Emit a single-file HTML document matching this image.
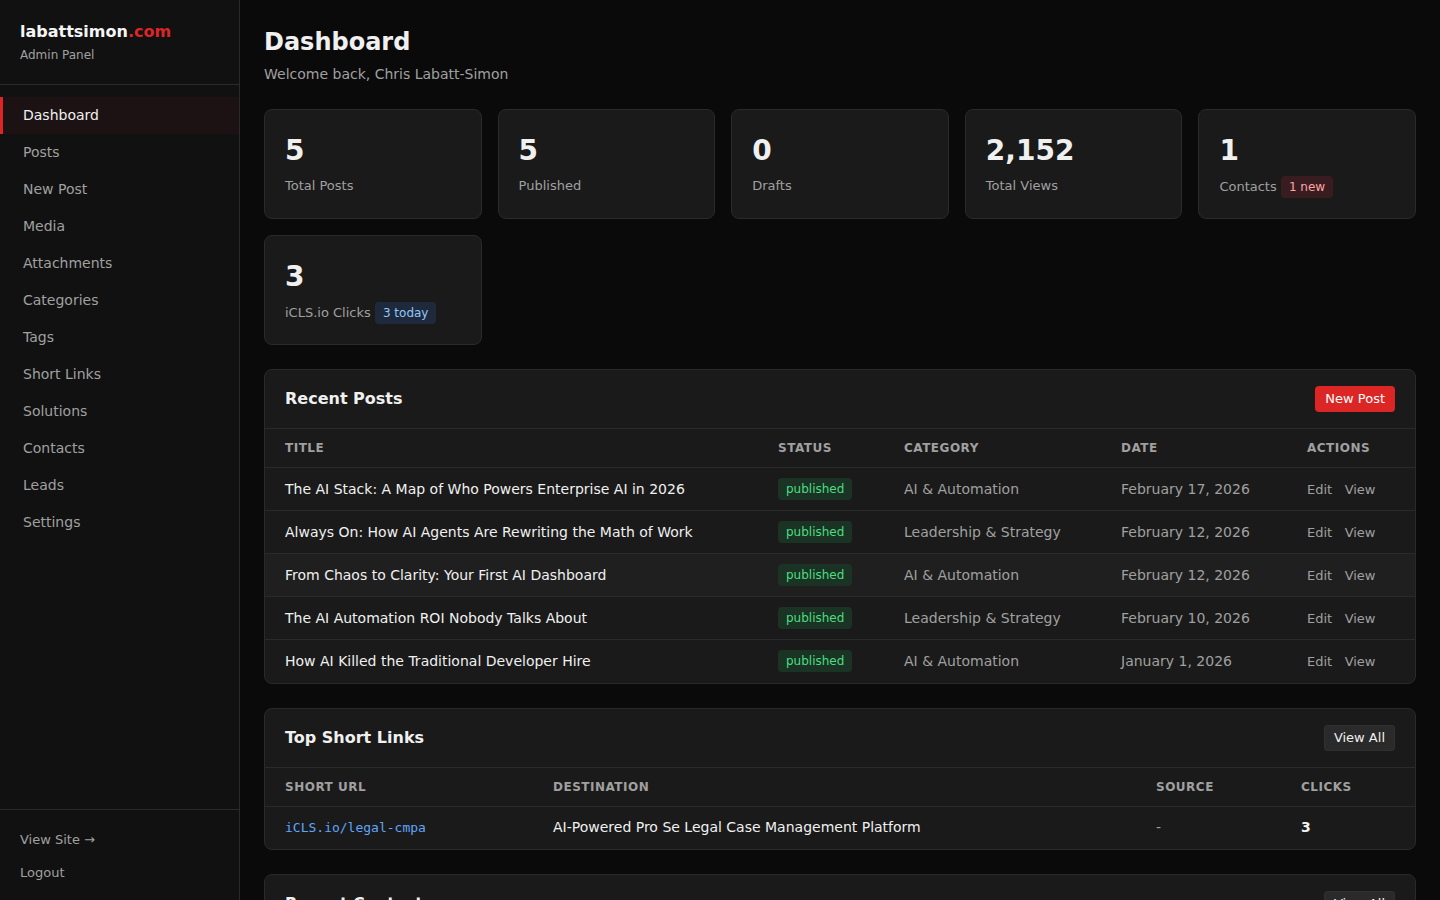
<!DOCTYPE html>
<html lang="en">
<head>
<meta charset="utf-8">
<title>Dashboard - Admin</title>
<style>
*{box-sizing:border-box;margin:0;padding:0}
html,body{width:1440px;height:900px;overflow:hidden}
body{background:#0a0a0a;color:#f0f0f0;font-family:"DejaVu Sans","Liberation Sans",sans-serif;font-size:14px;line-height:1.5}
a{color:inherit;text-decoration:none}
.sidebar{position:fixed;left:0;top:0;width:240px;height:900px;background:#111;border-right:1px solid #2a2a2a;display:flex;flex-direction:column}
.sb-head{padding:20px;border-bottom:1px solid #2a2a2a;height:85px}
.sb-head h1{font-size:16px;font-weight:700;line-height:24px;color:#f5f5f5}
.sb-head h1 span{color:#dc2626}
.sb-head small{display:block;font-size:12px;line-height:18px;color:#a0a0a0;margin-top:2px}
.nav{padding-top:12px;flex:1}
.nav a{display:block;height:37px;line-height:37px;padding-left:20px;border-left:3px solid transparent;font-size:14px;color:#a0a0a0}
.nav a.active{border-left-color:#dc2626;background:#1c1213;color:#f0f0f0}
.sb-foot{border-top:1px solid #2a2a2a;height:91px;padding:13px 20px 0}
.sb-foot a{display:block;font-size:13px;color:#a0a0a0;height:33px;line-height:33px}
.main{margin-left:240px;padding:24px}
.main h2{font-size:24px;font-weight:700;line-height:36px;color:#f0f0f0}
.main .sub{font-size:14px;color:#a0a0a0;line-height:21px;margin-top:4px}
.stats{display:grid;grid-template-columns:repeat(5,1fr);gap:16px;margin-top:24px}
.stat{background:#1a1a1a;border:1px solid #2a2a2a;border-radius:8px;height:110px;padding:20px}
.stat .n{font-size:28px;font-weight:700;line-height:42px;color:#f0f0f0}
.stat .l{font-size:13px;color:#a0a0a0;line-height:19.5px;margin-top:4px}
.badge{display:inline-block;font-size:12px;line-height:18px;padding:2px 8px;border-radius:4px}
.b-red{background:#391c20;color:#fca5a5}
.b-blue{background:#1e2a3c;color:#93c5fd}
.panel{background:#1a1a1a;border:1px solid #2a2a2a;border-radius:8px;margin-top:24px;overflow:hidden}
.p-head{height:59px;display:flex;align-items:center;justify-content:space-between;padding:0 20px;border-bottom:1px solid #2a2a2a}
.p-head h3{font-size:16px;font-weight:700;color:#f0f0f0}
.btn{display:inline-block;font-size:13px;height:26px;line-height:26px;padding:0 10px;border-radius:4px}
.btn-red{background:#dc2626;color:#fff}
.btn-gray{background:#2a2a2a;color:#f0f0f0;box-shadow:inset 0 0 0 1px #303030}
table{width:100%;border-collapse:separate;border-spacing:0}
th{height:39px;text-align:left;font-size:12px;font-weight:700;letter-spacing:.5px;color:#a0a0a0;padding:0 20px;text-transform:uppercase;border-bottom:1px solid #2a2a2a}
td{height:43px;padding:0 20px;font-size:14px;border-bottom:1px solid #2a2a2a;color:#f0f0f0}
tbody tr:last-child td{border-bottom-color:transparent}
.links td{height:42px}
tr.hov td{background:#1f1f1f}
td.m{color:#a0a0a0}
.pub{display:inline-block;background:#1b3324;color:#4ade80;font-size:12px;line-height:18px;padding:2px 8px;border-radius:4px}
.act a{font-size:13px;color:#a0a0a0;margin-right:8px}
.mono{font-family:"DejaVu Sans Mono","Liberation Mono",monospace;font-size:13px;color:#60a5fa}
</style>
</head>
<body>
<aside class="sidebar">
  <div class="sb-head">
    <h1>labattsimon<span>.com</span></h1>
    <small>Admin Panel</small>
  </div>
  <nav class="nav">
    <a class="active" href="#">Dashboard</a>
    <a href="#">Posts</a>
    <a href="#">New Post</a>
    <a href="#">Media</a>
    <a href="#">Attachments</a>
    <a href="#">Categories</a>
    <a href="#">Tags</a>
    <a href="#">Short Links</a>
    <a href="#">Solutions</a>
    <a href="#">Contacts</a>
    <a href="#">Leads</a>
    <a href="#">Settings</a>
  </nav>
  <div class="sb-foot">
    <a href="#">View Site →</a>
    <a href="#">Logout</a>
  </div>
</aside>
<main class="main">
  <h2>Dashboard</h2>
  <p class="sub">Welcome back, Chris Labatt-Simon</p>
  <section class="stats">
    <div class="stat"><div class="n">5</div><div class="l">Total Posts</div></div>
    <div class="stat"><div class="n">5</div><div class="l">Published</div></div>
    <div class="stat"><div class="n">0</div><div class="l">Drafts</div></div>
    <div class="stat"><div class="n">2,152</div><div class="l">Total Views</div></div>
    <div class="stat"><div class="n">1</div><div class="l">Contacts <span class="badge b-red">1 new</span></div></div>
    <div class="stat"><div class="n">3</div><div class="l">iCLS.io Clicks <span class="badge b-blue">3 today</span></div></div>
  </section>
  <section class="panel">
    <div class="p-head"><h3>Recent Posts</h3><a class="btn btn-red" href="#">New Post</a></div>
    <table>
      <colgroup><col style="width:493px"><col style="width:126px"><col style="width:217px"><col style="width:186px"><col></colgroup>
      <thead><tr><th>Title</th><th>Status</th><th>Category</th><th>Date</th><th>Actions</th></tr></thead>
      <tbody>
        <tr><td>The AI Stack: A Map of Who Powers Enterprise AI in 2026</td><td><span class="pub">published</span></td><td class="m">AI &amp; Automation</td><td class="m">February 17, 2026</td><td class="act"><a href="#">Edit</a> <a href="#">View</a></td></tr>
        <tr><td>Always On: How AI Agents Are Rewriting the Math of Work</td><td><span class="pub">published</span></td><td class="m">Leadership &amp; Strategy</td><td class="m">February 12, 2026</td><td class="act"><a href="#">Edit</a> <a href="#">View</a></td></tr>
        <tr class="hov"><td>From Chaos to Clarity: Your First AI Dashboard</td><td><span class="pub">published</span></td><td class="m">AI &amp; Automation</td><td class="m">February 12, 2026</td><td class="act"><a href="#">Edit</a> <a href="#">View</a></td></tr>
        <tr><td>The AI Automation ROI Nobody Talks About</td><td><span class="pub">published</span></td><td class="m">Leadership &amp; Strategy</td><td class="m">February 10, 2026</td><td class="act"><a href="#">Edit</a> <a href="#">View</a></td></tr>
        <tr><td>How AI Killed the Traditional Developer Hire</td><td><span class="pub">published</span></td><td class="m">AI &amp; Automation</td><td class="m">January 1, 2026</td><td class="act"><a href="#">Edit</a> <a href="#">View</a></td></tr>
      </tbody>
    </table>
  </section>
  <section class="panel links">
    <div class="p-head"><h3>Top Short Links</h3><a class="btn btn-gray" href="#">View All</a></div>
    <table>
      <colgroup><col style="width:268px"><col style="width:603px"><col style="width:145px"><col></colgroup>
      <thead><tr><th>Short URL</th><th>Destination</th><th>Source</th><th>Clicks</th></tr></thead>
      <tbody>
        <tr><td><span class="mono">iCLS.io/legal-cmpa</span></td><td>AI-Powered Pro Se Legal Case Management Platform</td><td class="m">-</td><td><b>3</b></td></tr>
      </tbody>
    </table>
  </section>
  <section class="panel">
    <div class="p-head"><h3>Recent Contacts</h3><a class="btn btn-gray" href="#">View All</a></div>
  </section>
</main>
</body>
</html>
